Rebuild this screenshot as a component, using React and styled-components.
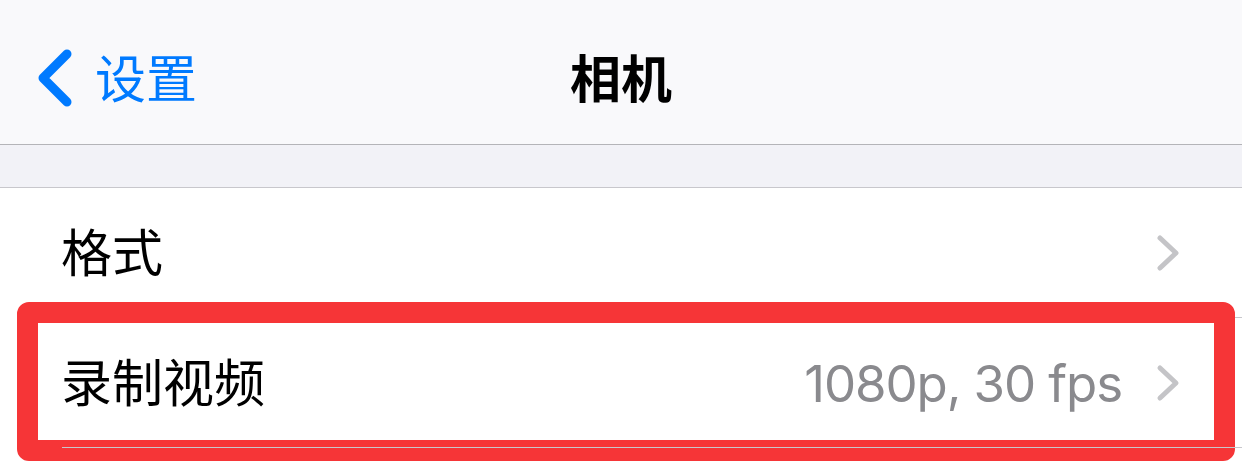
import React from 'react';
import styled, { createGlobalStyle } from 'styled-components';

const GlobalStyle = createGlobalStyle`
  html, body {
    margin: 0;
    padding: 0;
    background: #ffffff;
  }
  body {
    font-family: Inter, "Noto Sans CJK SC", sans-serif;
    -webkit-font-smoothing: antialiased;
  }
`;

const Screen = styled.div`
  width: 1242px;
  height: 474px;
  overflow: hidden;
  background: #fff;
`;

const NavBar = styled.div`
  height: 145px;
  box-sizing: border-box;
  padding-top: 14px;
  background: #f9f9fb;
  border-bottom: 1px solid #b4b4b8;
  display: grid;
  grid-template-columns: 1fr auto 1fr;
  align-items: center;
`;

const BackButton = styled.div`
  display: flex;
  align-items: center;
  gap: 22px;
  padding-left: 37px;
  color: #007aff;
  font-size: 51px;
  line-height: 1;
`;

const Title = styled.div`
  font-size: 51px;
  font-weight: 600;
  color: #000;
  line-height: 1;
`;

const Spacer = styled.div`
  height: 42px;
  background: #f2f2f7;
  border-bottom: 1px solid #c8c7cc;
`;

const List = styled.div`
  background: #fff;
`;

const Row = styled.div`
  position: relative;
  height: 130px;
  display: flex;
  align-items: center;
  padding-left: 61px;
  padding-right: 62px;
  box-sizing: border-box;
  &::after {
    content: '';
    position: absolute;
    left: 62px;
    right: 0;
    bottom: 0;
    height: 1px;
    background: #c8c7cc;
  }
`;

const Label = styled.div`
  flex: 1;
  font-size: 51px;
  color: #000;
  line-height: 1;
`;

const Value = styled.div`
  font-size: 51px;
  letter-spacing: -1.1px;
  color: #8a8a8e;
  line-height: 1;
  margin-right: 34px;
`;

const Highlight = styled.div`
  position: absolute;
  left: 17px;
  right: 7px;
  top: -16px;
  bottom: -13px;
  border: 21px solid #f63537;
  border-radius: 12px;
  pointer-events: none;
`;

const BackChevron = () => (
  <svg width="36" height="60" viewBox="0 0 36 60">
    <polyline
      points="30,5 6,29 30,53"
      fill="none"
      stroke="#007aff"
      strokeWidth="9"
      strokeLinecap="round"
      strokeLinejoin="round"
    />
  </svg>
);

const Chevron = () => (
  <svg width="24" height="38" viewBox="0 0 24 38">
    <polyline
      points="4,4 20,19 4,34"
      fill="none"
      stroke="#c4c4c7"
      strokeWidth="5"
      strokeLinecap="round"
      strokeLinejoin="round"
    />
  </svg>
);

export default function App() {
  return (
    <>
      <GlobalStyle />
      <Screen>
        <NavBar>
          <BackButton>
            <BackChevron />
            <span>设置</span>
          </BackButton>
          <Title>相机</Title>
          <div />
        </NavBar>
        <Spacer />
        <List>
          <Row>
            <Label>格式</Label>
            <Chevron />
          </Row>
          <Row>
            <Label>录制视频</Label>
            <Value>1080p, 30 fps</Value>
            <Chevron />
            <Highlight />
          </Row>
          <Row />
        </List>
      </Screen>
    </>
  );
}
